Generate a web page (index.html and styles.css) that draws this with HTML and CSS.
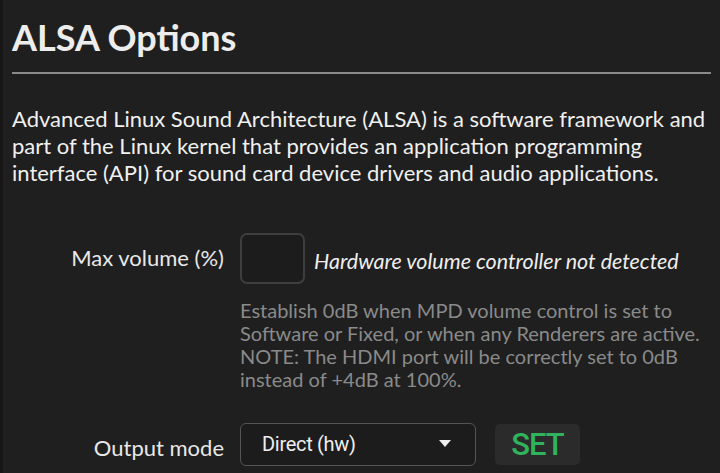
FILE: index.html
```html
<!doctype html>
<html>
	<head>
		<title>ALSA Options</title>
		<meta charset="utf-8" />
		<link rel="stylesheet" href="styles.css">
	</head>
	<body>
		<div class="panel">
			<h1 class="title">ALSA Options</h1>
			<p class="intro">Advanced Linux Sound Architecture (ALSA) is a software framework and part of the Linux kernel that provides an application programming interface (API) for sound card device drivers and audio applications.</p>

			<div class="row row-volume">
				<label class="label">Max volume (%)</label>
				<div class="control">
					<div class="inline">
						<input class="num" type="text" value="">
						<span class="note">Hardware volume controller not detected</span>
					</div>
					<p class="help">Establish 0dB when MPD volume control is set to Software or Fixed, or when any Renderers are active. NOTE: The HDMI port will be correctly set to 0dB instead of +4dB at 100%.</p>
				</div>
			</div>

			<div class="row row-mode">
				<label class="label">Output mode</label>
				<div class="control">
					<div class="inline">
						<div class="select">
							<span>Direct (hw)</span>
							<svg class="caret" width="12" height="7" viewBox="0 0 12 7"><path d="M0 0h12L6 7z" fill="#eee"/></svg>
						</div>
						<button class="set">SET</button>
					</div>
				</div>
			</div>
		</div>
	</body>
</html>
```

FILE: styles.css
```css
*{
	margin:0;
	padding:0;
	box-sizing:border-box;
}

html, body{
	background:#1f1f1f;
}

body{
	font-family:Lato, "Noto Sans", sans-serif;
	color:#eeeeee;
	border-left:3px solid #171717;
	min-height:473px;
}

.panel{
	padding:15px 9px 0 9px;
}

/* titre */
.title{
	font-size:36px;
	font-weight:700;
	line-height:44px;
	padding-bottom:13px;
	border-bottom:2px solid #8a8a8a;
	color:#ededed;
}

.intro{
	font-size:22px;
	line-height:27px;
	margin-top:31px;
	color:#f0f0f0;
}

/* lignes du formulaire */
.row{
	display:grid;
	grid-template-columns:212px 1fr;
	column-gap:16px;
	align-items:start;
}
.row-volume{
	margin-top:47px;
}

.label{
	text-align:right;
	font-size:22px;
	line-height:50px;
	color:#e8e8e8;
}

.inline{
	display:flex;
	align-items:center;
	gap:9px;
}

.num{
	width:65px;
	height:51px;
	background:#1c1c1c;
	border:2px solid #3e3e3e;
	border-radius:7px;
	outline:none;
}

.note{
	font-style:italic;
	font-size:21.5px;
	color:#eeeeee;
	padding-top:5px;
}

.help{
	font-size:20px;
	line-height:23px;
	color:#8a8a8a;
	margin-top:15px;
}

.row-mode{
	margin-top:32px;
}
.row-mode .label{
	line-height:43px;
	padding-top:3px;
}

.select{
	width:236px;
	height:43px;
	border:1.5px solid #555;
	border-radius:6px;
	display:flex;
	align-items:center;
	justify-content:space-between;
	padding:0 24px 2px 21px;
	font-family:Roboto, sans-serif;
	font-size:20px;
	letter-spacing:-0.3px;
	color:#eee;
	background:#1c1c1c;
}

.set{
	margin-left:10px;
	width:85px;
	height:41px;
	background:#2b2b2b;
	border:none;
	border-radius:5px;
	font-family:Roboto, sans-serif;
	font-size:31px;
	letter-spacing:-1px;
	font-weight:500;
	color:#2fb35d;
}
```
